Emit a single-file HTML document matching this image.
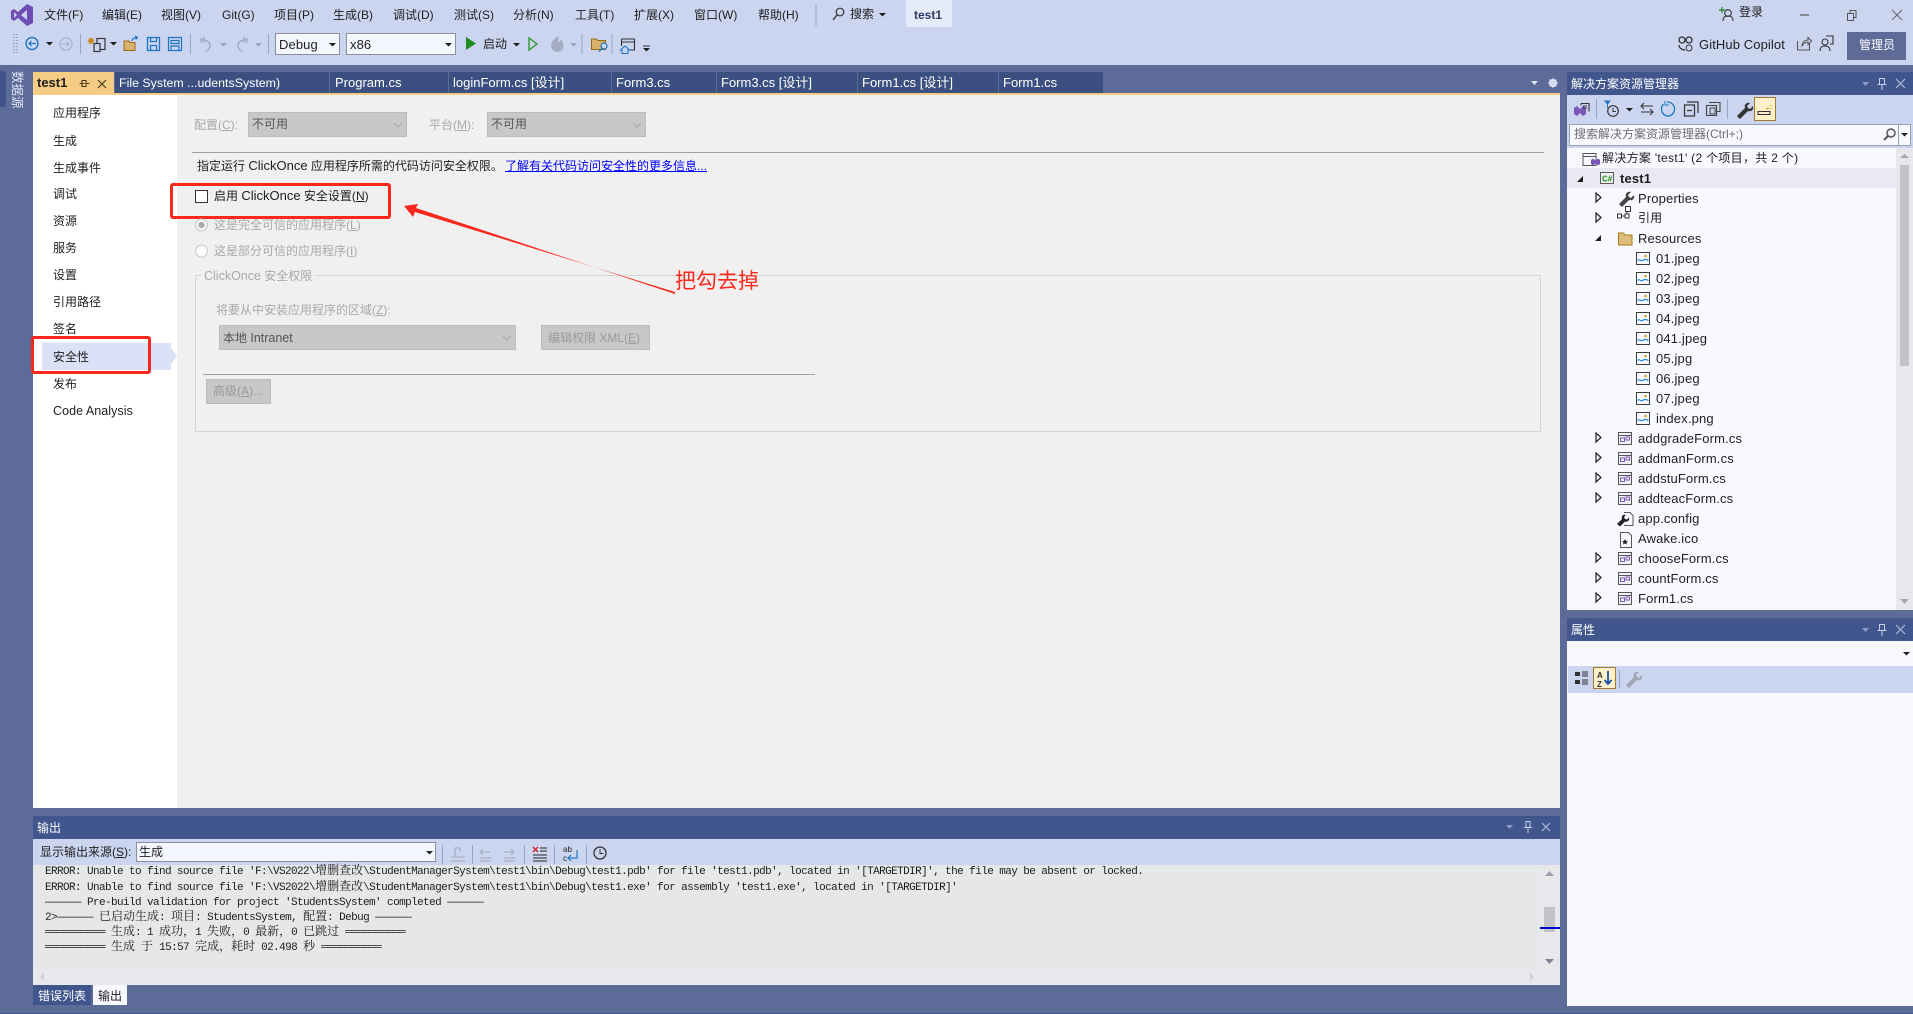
<!DOCTYPE html>
<html lang="zh-CN">
<head>
<meta charset="utf-8">
<title>test1</title>
<style>
html,body{margin:0;padding:0;width:1913px;height:1014px;overflow:hidden;background:#5d6b99}
body{position:relative;font-family:"Liberation Sans","Noto Sans CJK SC",sans-serif;font-size:12px;color:#1e1e1e}
.b{position:absolute}
.t{position:absolute;white-space:nowrap;line-height:14px;height:14px}
.w{color:#fff}
.l{font-size:13px;letter-spacing:.1px}
i{font-style:normal;font-size:13px}
.g{color:#a9a9a9}
.m{position:absolute;white-space:nowrap;font-family:"Liberation Mono","Noto Sans CJK SC",monospace;font-size:11px;letter-spacing:-.6px;line-height:15px;height:15px;color:#1e1e1e;left:45px}
.m b{font-weight:400;font-size:12px;letter-spacing:0;line-height:0;font-family:"Noto Serif CJK SC","Noto Sans CJK SC",serif}
.tr{position:absolute;white-space:nowrap;font-size:13px;letter-spacing:.15px;line-height:16px;height:16px;color:#1e1e1e}
.tab{position:absolute;top:72px;height:21px;background:#3b4f81;color:#fff;line-height:21px;font-size:13px;white-space:nowrap;padding-left:5px;box-sizing:border-box}
.cb{position:absolute;background:#c8c8c8;border:1px solid #bcbcbc;box-sizing:border-box;color:#555}
.u{text-decoration:underline}
svg{position:absolute;left:0;top:0}
</style>
</head>
<body>
<!-- chrome -->
<div class="b" style="left:0;top:0;width:1913px;height:65px;background:#ccd5f0"></div>
<div class="b" style="left:906px;top:0;width:46px;height:27px;background:#e6ebfa"></div>
<div class="b" style="left:1847px;top:32px;width:59px;height:28px;background:#5e6b97"></div>
<div class="b" style="left:0;top:71px;width:6px;height:36px;background:#3f558c"></div>
<div class="b" style="left:0;top:1013px;width:1913px;height:1px;background:#44578c"></div>

<!-- document tabs -->
<div class="b" style="left:33px;top:93px;width:1527px;height:2px;background:#f5cc84"></div>
<div class="tab" style="left:33px;width:81px;background:#f5cc84;color:#1e1e1e;font-weight:700;font-size:13px;padding-left:4px">test1</div>
<div class="tab" style="left:115px;width:214px;padding-left:4px;font-size:12.4px;line-height:22px">File System ...udentsSystem)</div>
<div class="tab" style="left:330px;width:118px">Program.cs</div>
<div class="tab" style="left:449px;width:162px;padding-left:4px">loginForm.cs [设计]</div>
<div class="tab" style="left:612px;width:104px;padding-left:4px">Form3.cs</div>
<div class="tab" style="left:717px;width:140px;padding-left:4px">Form3.cs [设计]</div>
<div class="tab" style="left:858px;width:140px;padding-left:4px">Form1.cs [设计]</div>
<div class="tab" style="left:999px;width:104px;padding-left:4px">Form1.cs</div>

<!-- main doc -->
<div class="b" style="left:33px;top:95px;width:144px;height:713px;background:#fff"></div>
<div class="b" style="left:177px;top:95px;width:1383px;height:713px;background:#f0f0f0"></div>
<div class="b" style="left:42px;top:343px;width:129px;height:27px;background:#dbe1f7"></div>
<div class="b" style="left:171px;top:348px;width:0;height:0;border-left:6px solid #dbe1f7;border-top:8px solid transparent;border-bottom:8px solid transparent"></div>

<!-- nav -->
<div class="t" style="left:53px;top:106px">应用程序</div>
<div class="t" style="left:53px;top:134px">生成</div>
<div class="t" style="left:53px;top:161px">生成事件</div>
<div class="t" style="left:53px;top:187px">调试</div>
<div class="t" style="left:53px;top:214px">资源</div>
<div class="t" style="left:53px;top:241px">服务</div>
<div class="t" style="left:53px;top:268px">设置</div>
<div class="t" style="left:53px;top:295px">引用路径</div>
<div class="t" style="left:53px;top:322px">签名</div>
<div class="t" style="left:53px;top:350px">安全性</div>
<div class="t" style="left:53px;top:377px">发布</div>
<div class="t" style="left:53px;top:404px;font-size:12.5px;letter-spacing:.05px">Code Analysis</div>

<!-- form -->
<div class="t g" style="left:194px;top:118px">配置(<span class="u">C</span>):</div>
<div class="cb" style="left:248px;top:112px;width:159px;height:25px"><span class="t" style="left:3px;top:4px">不可用</span></div>
<div class="t g" style="left:429px;top:118px">平台(<span class="u">M</span>):</div>
<div class="cb" style="left:487px;top:112px;width:159px;height:25px"><span class="t" style="left:3px;top:4px">不可用</span></div>
<div class="b" style="left:192px;top:152px;width:1352px;height:1px;background:#a0a0a0"></div>
<div class="t" style="left:197px;top:159px">指定运行 <i>ClickOnce</i> 应用程序所需的代码访问安全权限。</div>
<div class="t u" style="left:505px;top:159px;color:#0000ff">了解有关代码访问安全性的更多信息...</div>
<div class="b" style="left:195px;top:190px;width:13px;height:13px;border:1px solid #333;box-sizing:border-box;background:#fff"></div>
<div class="t" style="left:214px;top:189px">启用 <i>ClickOnce</i> 安全设置(<span class="u">N</span>)</div>
<div class="t g" style="left:214px;top:218px">这是完全可信的应用程序(<span class="u">L</span>)</div>
<div class="t g" style="left:214px;top:244px">这是部分可信的应用程序(<span class="u">I</span>)</div>
<div class="b" style="left:195px;top:275px;width:1346px;height:157px;border:1px solid #d4d4d4;box-sizing:border-box"></div>
<div class="t g" style="left:201px;top:269px;background:#f0f0f0;padding:0 3px"><i style="font-size:12.5px">ClickOnce</i> 安全权限</div>
<div class="t g" style="left:216px;top:303px">将要从中安装应用程序的区域(<span class="u">Z</span>):</div>
<div class="cb" style="left:219px;top:325px;width:297px;height:25px"><span class="t" style="left:3px;top:5px">本地 <i style="font-size:12.5px">Intranet</i></span></div>
<div class="cb" style="left:541px;top:325px;width:109px;height:25px"><span class="t g" style="left:6px;top:5px;color:#9a9a9a">编辑权限 XML(<span class="u">E</span>)</span></div>
<div class="b" style="left:203px;top:374px;width:612px;height:1px;background:#a0a0a0"></div>
<div class="cb" style="left:206px;top:379px;width:65px;height:25px"><span class="t g" style="left:6px;top:4px;color:#9a9a9a">高级(<span class="u">A</span>)...</span></div>

<!-- annotation -->
<div class="b" style="left:31px;top:336px;width:120px;height:38px;border:3px solid #f8281c;border-radius:3px;box-sizing:border-box"></div>
<div class="b" style="left:170px;top:183px;width:221px;height:36px;border:3px solid #f8281c;border-radius:3px;box-sizing:border-box"></div>
<div class="t" style="left:675px;top:270px;height:24px;line-height:24px;font-size:21px;color:#ff2a1f">把勾去掉</div>

<!-- output panel -->
<div class="b" style="left:33px;top:816px;width:1527px;height:23px;background:#40568d"></div>
<div class="t w" style="left:37px;top:821px">输出</div>
<div class="b" style="left:33px;top:839px;width:1527px;height:26px;background:#ccd5f0"></div>
<div class="t" style="left:40px;top:845px">显示输出来源(<span class="u">S</span>):</div>
<div class="b" style="left:136px;top:842px;width:300px;height:20px;background:#f4f6fe;border:1px solid #8a8f9f;box-sizing:border-box"></div>
<div class="t" style="left:139px;top:845px">生成</div>
<div class="b" style="left:33px;top:865px;width:1527px;height:105px;background:#e6e7e8"></div>
<div class="b" style="left:33px;top:970px;width:1527px;height:15px;background:#e9e8ec"></div>
<div class="m" style="top:865px">ERROR: Unable to find source file 'F:\VS2022\<b>增删查改</b>\StudentManagerSystem\test1\bin\Debug\test1.pdb' for file 'test1.pdb', located in '[TARGETDIR]', the file may be absent or locked.</div>
<div class="m" style="top:881px">ERROR: Unable to find source file 'F:\VS2022\<b>增删查改</b>\StudentManagerSystem\test1\bin\Debug\test1.exe' for assembly 'test1.exe', located in '[TARGETDIR]'</div>
<div class="m" style="top:896px">—————— Pre-build validation for project 'StudentsSystem' completed ——————</div>
<div class="m" style="top:911px">2&gt;—————— <b>已启动生成</b>: <b>项目</b>: StudentsSystem, <b>配置</b>: Debug ——————</div>
<div class="m" style="top:926px">══════════ <b>生成</b>: 1 <b>成功，</b>1 <b>失败，</b>0 <b>最新，</b>0 <b>已跳过</b> ══════════</div>
<div class="m" style="top:941px">══════════ <b>生成</b> <b>于</b> 15:57 <b>完成，耗时</b> 02.498 <b>秒</b> ══════════</div>
<div class="b" style="left:1541px;top:865px;width:19px;height:105px;background:#e8e8ec"></div>
<div class="b" style="left:1544px;top:907px;width:11px;height:25px;background:#c2c3c9"></div>
<div class="b" style="left:1540px;top:927px;width:20px;height:2px;background:#0000d0"></div>
<div class="b" style="left:33px;top:985px;width:58px;height:20px;background:#3f558c"></div>
<div class="t w" style="left:38px;top:989px">错误列表</div>
<div class="b" style="left:93px;top:985px;width:34px;height:20px;background:#f7f9fe"></div>
<div class="t" style="left:98px;top:989px">输出</div>

<!-- solution explorer -->
<div class="b" style="left:1567px;top:72px;width:346px;height:23px;background:#40568d"></div>
<div class="t w" style="left:1571px;top:77px">解决方案资源管理器</div>
<div class="b" style="left:1567px;top:95px;width:346px;height:53px;background:#ccd5f0"></div>
<div class="b" style="left:1754px;top:97px;width:22px;height:24px;background:#fff0cc;border:1px solid #a07a2c;box-sizing:border-box"></div>
<div class="b" style="left:1569px;top:124px;width:342px;height:22px;background:#f7f9fe;border:1px solid #9aa0b0;box-sizing:border-box"></div>
<div class="b" style="left:1898px;top:124px;width:1px;height:22px;background:#9aa0b0"></div>
<div class="t" style="left:1574px;top:127px;color:#6d6d6d">搜索解决方案资源管理器(Ctrl+;)</div>
<div class="b" style="left:1567px;top:148px;width:346px;height:462px;background:#f7f9fe"></div>
<div class="b" style="left:1567px;top:168px;width:329px;height:20px;background:#e8e9f2"></div>
<div class="b" style="left:1896px;top:148px;width:17px;height:462px;background:#e8e8ec"></div>
<div class="b" style="left:1900px;top:165px;width:9px;height:201px;background:#c2c3c9"></div>
<div class="tr" style="left:1602px;top:150px;font-size:12px;letter-spacing:.3px">解决方案 'test1' (2 个项目，共 2 个)</div>
<div class="tr" style="left:1620px;top:171px;font-weight:700">test1</div>
<div class="tr" style="left:1638px;top:191px">Properties</div>
<div class="tr" style="left:1638px;top:210px;font-size:12px">引用</div>
<div class="tr" style="left:1638px;top:231px">Resources</div>
<div class="tr" style="left:1656px;top:251px">01.jpeg</div>
<div class="tr" style="left:1656px;top:271px">02.jpeg</div>
<div class="tr" style="left:1656px;top:291px">03.jpeg</div>
<div class="tr" style="left:1656px;top:311px">04.jpeg</div>
<div class="tr" style="left:1656px;top:331px">041.jpeg</div>
<div class="tr" style="left:1656px;top:351px">05.jpg</div>
<div class="tr" style="left:1656px;top:371px">06.jpeg</div>
<div class="tr" style="left:1656px;top:391px">07.jpeg</div>
<div class="tr" style="left:1656px;top:411px">index.png</div>
<div class="tr" style="left:1638px;top:431px">addgradeForm.cs</div>
<div class="tr" style="left:1638px;top:451px">addmanForm.cs</div>
<div class="tr" style="left:1638px;top:471px">addstuForm.cs</div>
<div class="tr" style="left:1638px;top:491px">addteacForm.cs</div>
<div class="tr" style="left:1638px;top:511px">app.config</div>
<div class="tr" style="left:1638px;top:531px">Awake.ico</div>
<div class="tr" style="left:1638px;top:551px">chooseForm.cs</div>
<div class="tr" style="left:1638px;top:571px">countForm.cs</div>
<div class="tr" style="left:1638px;top:591px">Form1.cs</div>

<!-- properties -->
<div class="b" style="left:1567px;top:618px;width:346px;height:23px;background:#40568d"></div>
<div class="t w" style="left:1571px;top:623px">属性</div>
<div class="b" style="left:1567px;top:641px;width:346px;height:365px;background:#f7f9fe"></div>
<div class="b" style="left:1568px;top:666px;width:345px;height:27px;background:#ccd5f0"></div>
<div class="b" style="left:1593px;top:667px;width:23px;height:22px;background:#fff0cc;border:1px solid #a07a2c;box-sizing:border-box"></div>

<!-- menu -->
<div class="t" style="left:44px;top:8px">文件(F)</div>
<div class="t" style="left:102px;top:8px">编辑(E)</div>
<div class="t" style="left:161px;top:8px">视图(V)</div>
<div class="t" style="left:222px;top:8px">Git(G)</div>
<div class="t" style="left:274px;top:8px">项目(P)</div>
<div class="t" style="left:333px;top:8px">生成(B)</div>
<div class="t" style="left:393px;top:8px">调试(D)</div>
<div class="t" style="left:454px;top:8px">测试(S)</div>
<div class="t" style="left:513px;top:8px">分析(N)</div>
<div class="t" style="left:575px;top:8px">工具(T)</div>
<div class="t" style="left:634px;top:8px">扩展(X)</div>
<div class="t" style="left:694px;top:8px">窗口(W)</div>
<div class="t" style="left:758px;top:8px">帮助(H)</div>
<div class="t" style="left:850px;top:7px">搜索</div>
<div class="t" style="left:914px;top:8px;font-weight:700;color:#2c3a66">test1</div>
<div class="t" style="left:1739px;top:5px">登录</div>
<div class="t l" style="left:1699px;top:38px">GitHub Copilot</div>
<div class="t w" style="left:1859px;top:38px">管理员</div>

<!-- toolbar combos -->
<div class="b" style="left:275px;top:33px;width:65px;height:22px;background:#f4f6fe;border:1px solid #8a8f9f;box-sizing:border-box"></div>
<div class="t l" style="left:279px;top:38px">Debug</div>
<div class="b" style="left:346px;top:33px;width:110px;height:22px;background:#f4f6fe;border:1px solid #8a8f9f;box-sizing:border-box"></div>
<div class="t l" style="left:350px;top:38px">x86</div>
<div class="t" style="left:483px;top:37px">启动</div>

<!-- vertical tab label -->
<div class="t w" style="left:-1px;top:82px;width:36px;transform:rotate(90deg);font-size:12.5px;color:#dfe5f7">数据源</div>

<!-- icons overlay -->
<svg width="1913" height="1014" viewBox="0 0 1913 1014" xmlns="http://www.w3.org/2000/svg">
<defs>
<g id="form"><rect x=".5" y=".5" width="13" height="12" fill="#f2f2f6" stroke="#55565c"/><path d="M1 3.5h12" stroke="#55565c"/><rect x="2.5" y="6" width="4" height="3.5" fill="none" stroke="#7a57b8"/><rect x="8" y="5" width="3.5" height="3" fill="none" stroke="#7a57b8"/></g>
<g id="img"><rect x=".5" y=".5" width="13" height="12" fill="#f7f9fe" stroke="#3c3c3c"/><path d="M1.5 8.5c2-2.500 3 1.500 5 0s2.500-1.500 6 0" fill="none" stroke="#2b8ad4" stroke-width="1.200"/><circle cx="9.500" cy="4" r="1.300" fill="#d69a2d"/></g>
<path id="exp" d="M0 0l5 4.500-5 4.500z" fill="#f7f9fe" stroke="#1e1e1e" stroke-width="1.200"/>
<path id="dn" d="M0 0h7l-3.500 3.500z" fill="#1e1e1e"/>
<path id="dng" d="M0 0h7l-3.500 3.500z" fill="#9aa3bd"/>
<path id="chev" d="M0 0l4 4 4-4" fill="none" stroke="#a8a8a8"/>
</defs>

<!-- VS logo -->
<path d="M27 4l6 3v16l-6 3-9-8-4 3-3-2V11l3-2 4 3zM27 10l-6 5 6 5zM14 12v6l3-3z" fill="#6e4eb2" fill-rule="evenodd"/>

<!-- title separators -->
<path d="M816 4v22" stroke="#9aa5c4"/>
<circle cx="840" cy="12" r="3.800" fill="none" stroke="#333" stroke-width="1.200"/><path d="M837 15l-4 5" stroke="#333" stroke-width="1.300"/>
<use href="#dn" x="879" y="13"/>

<!-- toolbar -->
<path d="M14 34v21M17 34v21" stroke="#6a7188" stroke-width="1" stroke-dasharray="1 2"/>
<circle cx="32" cy="43.500" r="6" fill="none" stroke="#1e76c4" stroke-width="1.400"/><path d="M36 43.500h-7M31.500 41l-2.500 2.500 2.500 2.500" fill="none" stroke="#1e76c4" stroke-width="1.200"/>
<use href="#dn" x="46" y="42"/>
<circle cx="66" cy="44" r="6" fill="none" stroke="#a8b2cc" stroke-width="1.300"/><path d="M62 44h7M66.500 41.500l2.500 2.500-2.500 2.500" fill="none" stroke="#a8b2cc" stroke-width="1.200"/>
<path d="M80.500 34v20M190.500 34v20M268.500 34v20M582 34v20M612 34v20" stroke="#9aa5c4"/>
<path d="M91 37l1 2 2-1-1 2 2 1-2 1 1 2-2-1-1 2-1-2-2 1 1-2-2-1 2-1-1-2 2 1z" fill="#c98a1b"/>
<rect x="97" y="38.500" width="8" height="11" fill="none" stroke="#333" stroke-width="1.200"/><rect x="94" y="43.500" width="6" height="8" fill="#ccd5f0" stroke="#333" stroke-width="1.200"/>
<use href="#dn" x="110" y="42"/>
<path d="M124 41h5l1 1.500h5v8h-11z" fill="#d8b26a" stroke="#9a6a14"/><path d="M132 41c0-2 2-3.500 5-3.500M135 36l2.500 1.500-2 2" fill="none" stroke="#1e76c4" stroke-width="1.200"/>
<path d="M147.500 37.500h12v13h-12z M150.500 37.500v4h6v-4M150.500 50.500v-5h6v5" fill="none" stroke="#1e76c4" stroke-width="1.300"/>
<path d="M168.500 37.500h13v13h-13z M171 40.500h8v3h-8zM171 50v-4h8v4" fill="none" stroke="#1e76c4" stroke-width="1.200"/>
<path d="M201 41l3-3v2.500c4 0 6 2 6 5s-2 5-5 6" fill="none" stroke="#a2abc4" stroke-width="1.400"/><path d="M201 38v4h4" fill="none" stroke="#a2abc4"/>
<use href="#dng" x="220" y="43"/>
<path d="M247 41l-3-3v2.500c-4 0-6 2-6 5s2 5 5 6" fill="none" stroke="#a2abc4" stroke-width="1.400"/><path d="M247 38v4h-4" fill="none" stroke="#a2abc4"/>
<use href="#dng" x="255" y="43"/>
<use href="#dn" x="329" y="43"/>
<use href="#dn" x="445" y="43"/>
<path d="M466 37l10 6.500-10 6.500z" fill="#1f8a1f"/>
<use href="#dn" x="513" y="43"/>
<path d="M529 38l8 6-8 6z" fill="none" stroke="#2e9a2e" stroke-width="1.400"/>
<path d="M559 36c-5 2-8 6-8 10 0 3 3 6 6.500 6s6-3 6-6c0-3-1.500-5-2.500-7-1 2-1.500 3-2.500 3-.5-2 0-4 .5-6z" fill="#a4adc4"/>
<use href="#dng" x="570" y="43"/>
<path d="M591.500 39h5l1.500 1.500h7.500v9h-14z" fill="#d8b26a" stroke="#9a6a14"/><circle cx="604" cy="46" r="3" fill="#ccd5f0" stroke="#1e76c4" stroke-width="1.200"/><path d="M602 48.500l-3 3" stroke="#1e76c4" stroke-width="1.300"/>
<path d="M621.500 39h13v11h-9M621.500 39v7M621.500 42h13" fill="none" stroke="#333" stroke-width="1.100"/>
<path d="M625 46l-4.500 4h1.500v3.500h6V50h1.500z" fill="#ccd5f0" stroke="#1e76c4" stroke-width="1.100"/>
<path d="M643 46h7" stroke="#333"/><use href="#dn" x="643" y="48"/>

<!-- titlebar right -->
<path d="M1722 7v6M1719 10h6" stroke="#1a8a1a" stroke-width="1.200"/>
<circle cx="1728" cy="13" r="3.300" fill="none" stroke="#333" stroke-width="1.100"/><path d="M1723 21c0-4 2-5 5-5s5 1 5 5" fill="none" stroke="#333" stroke-width="1.100"/>
<path d="M1800 15h9" stroke="#555" stroke-width="1.200"/>
<path d="M1847.500 13.500h6v7h-6zM1850 13v-2.500h6v7h-2.500" fill="none" stroke="#555"/>
<path d="M1892 10l10 10M1902 10l-10 10" stroke="#666"/>
<circle cx="1682" cy="40" r="3" fill="none" stroke="#333" stroke-width="1.300"/><circle cx="1689" cy="40" r="3" fill="none" stroke="#333" stroke-width="1.300"/><path d="M1679 45c0 3 3 5 6 5" fill="none" stroke="#333" stroke-width="1.300"/><circle cx="1689" cy="48" r="3" fill="none" stroke="#333"/>
<path d="M1797.500 41v9h12v-7" fill="none" stroke="#555" stroke-width="1.100"/><path d="M1802 46c0-4 3-6 6-6v-2.500l3.500 3.500-3.500 3.500V42c-2 0-4 1-6 4z" fill="none" stroke="#555"/>
<circle cx="1825" cy="42" r="3" fill="none" stroke="#333" stroke-width="1.100"/><path d="M1820 51c0-4 2-5 5-5s5 1 5 5" fill="none" stroke="#333" stroke-width="1.100"/><path d="M1826 36h7v8h-3" fill="none" stroke="#333" stroke-width="1.100"/>

<!-- tab icons -->
<path d="M79.500 83.500h5M82 80.500v6h4v-6zM86 83.500h3.500" fill="none" stroke="#4a3a15" stroke-width="1.100"/>
<path d="M98 80l8 8M106 80l-8 8" stroke="#4a3a15" stroke-width="1.200"/>
<path d="M1531 81h7l-3.500 4z" fill="#dfe5f7"/>
<circle cx="1553" cy="83" r="3" fill="none" stroke="#dfe5f7" stroke-width="2"/><path d="M1553 78v10M1548 83h10M1549.500 79.500l7 7M1556.500 79.500l-7 7" stroke="#dfe5f7"/>

<!-- panel title buttons SE -->
<path d="M1862 82h7l-3.500 4z" fill="#8c9bc4"/>
<path d="M1879.500 78.500h5v6h-5zM1877.500 84.500h9M1882 85v5" fill="none" stroke="#c7d0ea"/>
<path d="M1896 79l9 9M1905 79l-9 9" stroke="#aeb9d9" stroke-width="1.200"/>
<!-- props buttons -->
<path d="M1862 628h7l-3.500 4z" fill="#8c9bc4"/>
<path d="M1879.500 624.500h5v6h-5zM1877.500 630.500h9M1882 631v5" fill="none" stroke="#c7d0ea"/>
<path d="M1896 625l9 9M1905 625l-9 9" stroke="#aeb9d9" stroke-width="1.200"/>
<!-- output buttons -->
<path d="M1506 825h7l-3.500 4z" fill="#8c9bc4"/>
<path d="M1526 821.500h4v6h-4zM1524 827.500h8M1528 828v5" fill="none" stroke="#c7d0ea"/>
<path d="M1542 823l8 8M1550 823l-8 8" stroke="#aeb9d9" stroke-width="1.200"/>

<!-- annotation arrow -->
<path d="M675 292L415 212l-2 5-9-11 14-2-2 4 259 86z" fill="#f8281c"/>

<!-- form widgets -->
<use href="#chev" x="394" y="123"/><use href="#chev" x="633" y="123"/><use href="#chev" x="503" y="336"/>
<circle cx="201.500" cy="225" r="6" fill="#f5f5f5" stroke="#c8c8c8"/><circle cx="201.500" cy="225" r="3" fill="#a8a8a8"/>
<circle cx="201.500" cy="251" r="6" fill="#fbfbfb" stroke="#c8c8c8"/>

<!-- SE toolbar -->
<path d="M1574 108l3-2 3 3 3-3 3 2v6l-3 2-3-3-3 3-3-2z" fill="#7a57b8"/>
<path d="M1581 103.500h8v8M1581 103.500v2" fill="none" stroke="#333" stroke-width="1.100"/><path d="M1583 106h4M1583 108h4" stroke="#333"/>
<path d="M1596.500 99v20M1727.500 99v20" stroke="#9aa5c4"/>
<circle cx="1613" cy="111" r="5.300" fill="none" stroke="#333" stroke-width="1.200"/><path d="M1613 108v3.500h3" fill="none" stroke="#333"/><path d="M1605 101h5l-2.500 3zM1607.500 103v5" fill="#1e76c4" stroke="#1e76c4"/>
<use href="#dn" x="1626" y="108"/>
<path d="M1641 106h12M1644 103l-3 3 3 3M1641 112h12M1650 109l3 3-3 3" fill="none" stroke="#333" stroke-width="1.100"/>
<path d="M1667 102c4.500 0 7.500 3 7.500 7 0 4-3 7-6.500 7s-6.500-3-6.500-7c0-2 1-4 2-5" fill="none" stroke="#1e76c4" stroke-width="1.300"/><path d="M1665 101v4h4" fill="none" stroke="#1e76c4"/>
<rect x="1684.500" y="105" width="10" height="11" fill="#ccd5f0" stroke="#333" stroke-width="1.200"/><path d="M1687 102h11v11M1687 110.500h5" fill="none" stroke="#333" stroke-width="1.200"/>
<path d="M1709 102.500h11v9h-3M1706.500 105.500h10v10h-10z" fill="none" stroke="#444" stroke-width="1.100"/><rect x="1710" y="108" width="5" height="6" fill="none" stroke="#444"/>
<path d="M1737 116l8-8c-1-3 1-6 5-5l-3 3 1 2 2 1 3-3c1 4-2 6-5 5l-8 8z" fill="#333"/>
<path d="M1758 111.500h12v3h-12z" fill="none" stroke="#333" stroke-width="1.100"/><path d="M1771 105v1M1771 108v1M1768 108v1M1766 109l3-1" stroke="#c98a1b"/>
<circle cx="1891" cy="133" r="4" fill="none" stroke="#555" stroke-width="1.500"/><path d="M1888 136l-4 4" stroke="#555" stroke-width="2"/>
<use href="#dn" x="1901" y="133"/>

<!-- scroll arrows -->
<path d="M1900 158h9l-4.500-4z" fill="#a8a8ae"/><path d="M1900 599h9l-4.500 5z" fill="#a8a8ae"/>

<!-- tree expanders -->
<path d="M1577 182l6-6v6z" fill="#1e1e1e"/>
<use href="#exp" x="1596" y="193"/>
<use href="#exp" x="1596" y="213"/>
<path d="M1595 241l6-6v6z" fill="#1e1e1e"/>
<use href="#exp" x="1596" y="433"/><use href="#exp" x="1596" y="453"/><use href="#exp" x="1596" y="473"/><use href="#exp" x="1596" y="493"/>
<use href="#exp" x="1596" y="553"/><use href="#exp" x="1596" y="573"/><use href="#exp" x="1596" y="593"/>

<!-- tree icons -->
<path d="M1583 153.500h13v12h-13zM1583 156.500h13" fill="none" stroke="#555" stroke-width="1"/><path d="M1591 160l2-1.500 2.500 2 2.500-2 2 1.500v4l-2 1.500-2.500-2-2.500 2-2-1.500z" fill="#7a57b8"/>
<rect x="1600.500" y="172.500" width="13" height="11" fill="#eef1ee" stroke="#5a5a5a"/>
<text x="1602" y="181.500" font-family="Liberation Sans" font-size="8" font-weight="700" fill="#1a8a1a">C#</text>
<path d="M1619 204l7-7c-1-3 1-6 5-5l-3 3 1 2 2 1 3-3c1 4-2 6-5 5l-7 7z" fill="#444"/>
<path d="M1617.500 214h4v4h-4zM1625 214h4v4h-4zM1625.500 206.500h5v5h-5zM1621.500 216h3.500M1627 211v3" fill="none" stroke="#333"/>
<path d="M1618.500 233h5l1.500 2h7v10h-13.500z" fill="#dcbd7a" stroke="#a5761a"/>
<use href="#img" x="1636" y="252"/><use href="#img" x="1636" y="272"/><use href="#img" x="1636" y="292"/><use href="#img" x="1636" y="312"/><use href="#img" x="1636" y="332"/><use href="#img" x="1636" y="352"/><use href="#img" x="1636" y="372"/><use href="#img" x="1636" y="392"/><use href="#img" x="1636" y="412"/>
<use href="#form" x="1618" y="432"/><use href="#form" x="1618" y="452"/><use href="#form" x="1618" y="472"/><use href="#form" x="1618" y="492"/>
<path d="M1624 512.500h6l3 3v10h-9" fill="none" stroke="#555"/><path d="M1617 524l5-5c-1-3 1-5 4-4l-2 2 1 2 2 .5 2-2c1 3-2 5-4 4l-5 5z" fill="#222"/>
<path d="M1620.500 532.500h8l3 3v12h-11z" fill="#f7f9fe" stroke="#555"/><path d="M1625 539l1 2h2l-1.500 1.500.5 2-2-1-2 1 .5-2-1.500-1.500h2z" fill="#222"/>
<use href="#form" x="1618" y="552"/><use href="#form" x="1618" y="572"/><use href="#form" x="1618" y="592"/>

<!-- props toolbar -->
<use href="#dn" x="1903" y="652"/>
<path d="M1575 672h5v4h-5zM1575 680h5v4h-5z" fill="#333"/><path d="M1582 672h6M1582 674h6M1582 676h6M1582 680h6M1582 682h6M1582 684h6" stroke="#333"/>
<text x="1597" y="678" font-family="Liberation Sans" font-size="8" font-weight="700" fill="#333">A</text>
<text x="1597" y="687" font-family="Liberation Sans" font-size="8" font-weight="700" fill="#333">Z</text>
<path d="M1608 671v12M1604.500 680l3.500 4 3.500-4" fill="none" stroke="#1552a8" stroke-width="1.800"/>
<path d="M1619.500 670v18" stroke="#9aa5c4"/>
<path d="M1626 685l8-8c-1-3 1-6 5-5l-3 3 1 2 2 1 3-3c1 4-2 6-5 5l-8 8z" fill="#a0a6b4"/>

<!-- output toolbar -->
<use href="#dn" x="426" y="851"/>
<path d="M442.500 845v19M472.500 845v19M524.500 845v19M554.500 845v19M586.500 845v19" stroke="#9aa5c4"/>
<path d="M451 857h14M451 861h14M455 856v-8h4c2 0 2 3 0 3" fill="none" stroke="#a8b0c6" stroke-width="1.200"/>
<path d="M480 852h10M483 849l-3 3 3 3M480 858h11M480 861h11" fill="none" stroke="#a8b0c6" stroke-width="1.200"/>
<path d="M504 852h10M511 849l3 3-3 3M504 858h11M504 861h11" fill="none" stroke="#a8b0c6" stroke-width="1.200"/>
<path d="M533 847l5 5M538 847l-5 5" stroke="#d4202a" stroke-width="1.400"/>
<path d="M540 848h7M540 851h7M533 855h14M533 858h14M533 861h14" stroke="#222"/>
<text x="563" y="852" font-family="Liberation Sans" font-size="8" fill="#222">ab</text>
<text x="563" y="861" font-family="Liberation Sans" font-size="8" fill="#222">c</text>
<path d="M577 850v8h-9M571 855l-3 3 3 3" fill="none" stroke="#1e76c4" stroke-width="1.200"/>
<circle cx="600" cy="853" r="6" fill="none" stroke="#333" stroke-width="1.300"/><path d="M600 849v4.500h3.500" fill="none" stroke="#333"/>
<path d="M1545 876h9l-4.500-5z" fill="#9aa0ad"/><path d="M1545 959h9l-4.500 5z" fill="#7d8390"/>
<path d="M44 973v8l-4-4z" fill="#d0d0d4"/><path d="M1530 973v8l4-4z" fill="#d0d0d4"/>
</svg>
</body>
</html>
